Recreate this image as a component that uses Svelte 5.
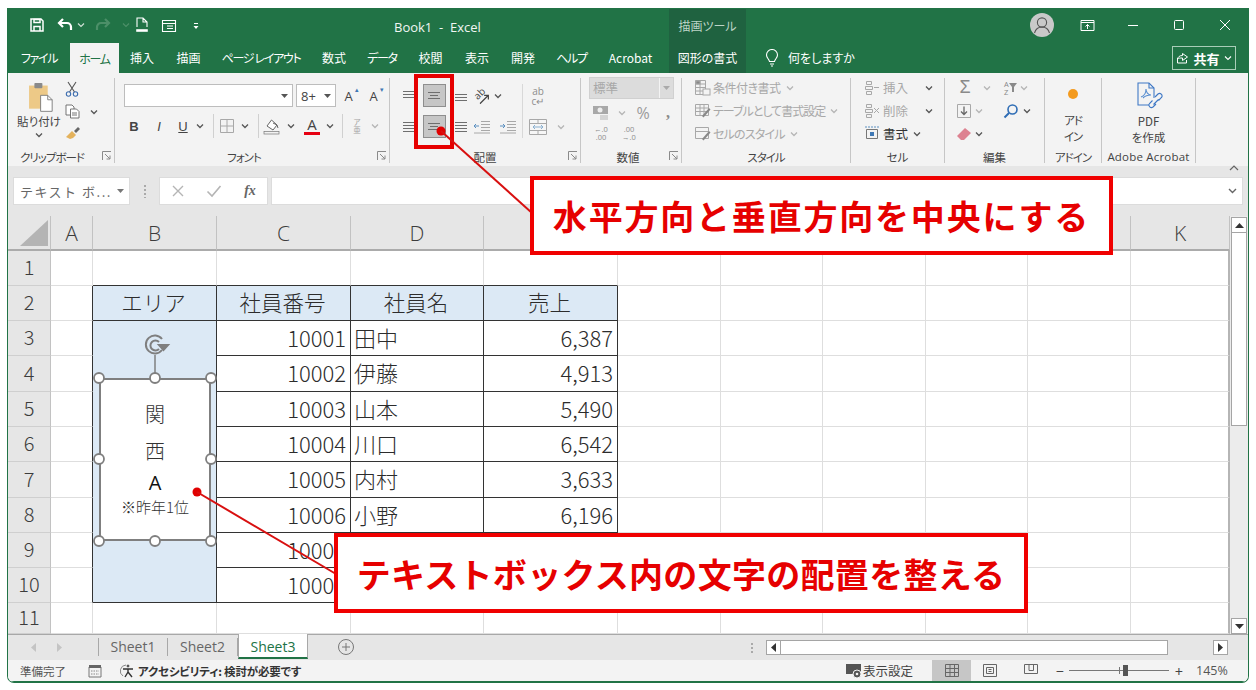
<script lang="ts">
	const tabs = [
		{ label: 'ファイル', w: 62, kana: true },
		{ label: 'ホーム', w: 49, active: true, kana: true },
		{ label: '挿入', w: 46 },
		{ label: '描画', w: 47 },
		{ label: 'ページ レイアウト', w: 98, kana: true },
		{ label: '数式', w: 48 },
		{ label: 'データ', w: 48, kana: true },
		{ label: '校閲', w: 49 },
		{ label: '表示', w: 44 },
		{ label: '開発', w: 48 },
		{ label: 'ヘルプ', w: 49, kana: true },
		{ label: 'Acrobat', w: 69 },
		{ label: '図形の書式', w: 77, context: true }
	];

	// E to J headers sit under the first callout
	const columns = [
		{ name: 'A', w: 42 },
		{ name: 'B', w: 124 },
		{ name: 'C', w: 134 },
		{ name: 'D', w: 133 },
		{ name: '', w: 134 },
		{ name: '', w: 103 },
		{ name: '', w: 102 },
		{ name: '', w: 103 },
		{ name: '', w: 102 },
		{ name: '', w: 103 },
		{ name: 'K', w: 99 }
	];
	const rowHeights = [35, 35, 35, 36, 35, 35, 36, 35, 35, 35, 31];

	const records = [
		['10001', '田中', '6,387'],
		['10002', '伊藤', '4,913'],
		['10003', '山本', '5,490'],
		['10004', '川口', '6,542'],
		['10005', '内村', '3,633'],
		['10006', '小野', '6,196'],
		['10007', '', ''],
		['10008', '', '']
	];

	const gridCols = '43px ' + columns.map((c) => c.w + 'px').join(' ');
	const gridRows = '35px ' + rowHeights.map((h) => h + 'px').join(' ');

	function cellAt(r: number, c: number) {
		// r and c are 1-based sheet positions, B2:E10 is the table
		if (r === 2 && c >= 2 && c <= 5) {
			return { text: ['エリア', '社員番号', '社員名', '売上'][c - 2], cls: 'tbl head' };
		}
		if (r >= 3 && r <= 10 && c === 2) {
			return { text: '', cls: r === 10 ? 'area last' : 'area' };
		}
		if (r >= 3 && r <= 10 && c >= 3 && c <= 5) {
			const align = c === 4 ? 'left' : 'right';
			return { text: records[r - 3][c - 3], cls: 'tbl ' + align };
		}
		if (r === 1 && c >= 2 && c <= 5) return { text: '', cls: 'above' };
		if (c === 1 && r >= 2 && r <= 10) return { text: '', cls: 'before' };
		if (c === 11) return { text: '', cls: 'lastcol' };
		return { text: '', cls: '' };
	}

	const handles = [
		[99, 378], [155, 378], [211, 378],
		[99, 459], [211, 459],
		[99, 541], [155, 541], [211, 541]
	];
</script>

{#snippet chev(dim = false)}
	<svg class="chev" class:dim width="8" height="6" viewBox="0 0 8 6"><path d="M1 1.5 4 4.5 7 1.5" fill="none" stroke="currentColor" stroke-width="1.3" /></svg>
{/snippet}

{#snippet launcher()}
	<svg class="launcher" width="10" height="10" viewBox="0 0 10 10"><path d="M.5 9V.5H9M3 3l5 5M8 4.5V8H4.5" fill="none" stroke="#8a8a8a" /></svg>
{/snippet}

{#snippet lines(kind: string)}
	<svg width="16" height="14" viewBox="0 0 16 14" stroke="#6e6e6e" stroke-width="1.2">
		{#if kind === 'top'}
			<path d="M2 2.5h12M2 5.5h12M2 8.5h12" />
		{:else if kind === 'mid'}
			<path d="M2 3.5h12M4 6.5h8M2 9.5h12" />
		{:else if kind === 'bot'}
			<path d="M2 5.5h12M2 8.5h12M2 11.5h12" />
		{:else}
			<path d="M2 2.5h12M2 5.5h12M2 8.5h12M2 11.5h12" />
		{/if}
	</svg>
{/snippet}

<div class="page">
	<div class="window">
		<header class="title">
			<div class="qat">
				<svg class="q1" width="16" height="16" viewBox="0 0 16 16" fill="none" stroke="#fff" stroke-width="1.5"><path d="M2 2h10l2 2v10H2z" /><path d="M5 2.5h6v3H5zM5 14V9.5h6V14" /></svg>
				<svg class="q2" width="16" height="14" viewBox="0 0 16 14" fill="none" stroke="#fff" stroke-width="2.2"><path d="M6 1 2 5l4 4" /><path d="M2.5 5H10a4 4 0 0 1 4 4v3" /></svg>
				<svg class="q3" width="8" height="6" viewBox="0 0 8 6"><path d="M1 1.5 4 4.5 7 1.5" fill="none" stroke="#cfe0d6" stroke-width="1.2" /></svg>
				<svg class="q4" width="16" height="14" viewBox="0 0 16 14" fill="none" stroke="#4c8f68" stroke-width="2.2"><path d="M10 1l4 4-4 4" /><path d="M13.5 5H6a4 4 0 0 0-4 4v3" /></svg>
				<svg class="q5" width="8" height="6" viewBox="0 0 8 6"><path d="M1 1.5 4 4.5 7 1.5" fill="none" stroke="#4c8f68" stroke-width="1.2" /></svg>
				<svg class="q6" width="14" height="16" viewBox="0 0 14 16" fill="none" stroke="#fff" stroke-width="1.1"><path d="M2 10V1h6l4 4v5M8 1v4h4" /><path d="M1.5 12.5h11v2h-11z" fill="#fff" stroke-width=".6" /></svg>
				<svg class="q7" width="16" height="14" viewBox="0 0 16 14" fill="none" stroke="#fff" stroke-width="1.1"><path d="M1.5 1.5h13v11h-13zM1.5 4.5h13M6 7h6M6 9.5h6" /></svg>
				<svg class="q8" width="6" height="8" viewBox="0 0 6 8" fill="#fff"><path d="M1 1h4v1H1zM.5 4h5L3 7z" /></svg>
			</div>
			<div class="doc-name">Book1 &nbsp;-&nbsp; Excel</div>
			<div class="context-head">描画ツール</div>
			<div class="win-controls">
				<div class="avatar">
					<svg width="24" height="24" viewBox="0 0 24 24" fill="none" stroke="#555" stroke-width="1.1"><circle cx="12" cy="9.5" r="4.6" /><path d="M4.5 20c1.2-4.2 4-6 7.5-6s6.300 1.800 7.500 6" /></svg>
				</div>
				<svg class="wc wc-ribbon" width="15" height="13" viewBox="0 0 15 13" fill="none" stroke="#fff"><path d="M1 1.500h13v10H1zM1 3.500h13M7.500 10V5.500M5.500 7.500l2-2 2 2" /></svg>
				<svg class="wc wc-min" width="12" height="12" viewBox="0 0 12 12" stroke="#fff"><path d="M1 6.500h10" /></svg>
				<svg class="wc wc-max" width="12" height="12" viewBox="0 0 12 12" fill="none" stroke="#fff"><rect x="1.500" y="1.500" width="9" height="9" rx="1" /></svg>
				<svg class="wc wc-close" width="12" height="12" viewBox="0 0 12 12" stroke="#fff"><path d="M1 1l10 10M11 1 1 11" /></svg>
			</div>
		</header>

		<nav class="tabs">
			{#each tabs as tab}
				<div class="tab" class:active={tab.active} class:context={tab.context} class:kana={tab.kana} style:width="{tab.w}px">{tab.label}</div>
			{/each}
			<div class="tell">
				<svg width="14" height="18" viewBox="0 0 14 18" fill="none" stroke="#fff" stroke-width="1.1"><path d="M4.500 12.500C4 10 1.500 9 1.500 6a5.500 5.500 0 0 1 11 0c0 3-2.500 4-3 6.500zM5 15h4M6 17h2" /></svg>
				<span>何をしますか</span>
			</div>
			<div class="share">
				<svg width="13" height="12" viewBox="0 0 13 12" fill="none" stroke="#fff"><path d="M1.500 6v5h9V8M1.500 7c.5-2 2-3.500 5-3.500V1.500L11.500 5l-5 3.500V6C4 6 2.500 6 1.500 7z" /></svg>
				<b>共有</b>
				<svg width="8" height="6" viewBox="0 0 8 6"><path d="M1 1.500 4 4.500 7 1.500" fill="none" stroke="#fff" stroke-width="1.100" /></svg>
			</div>
		</nav>

		<section class="ribbon">
			<div class="group g-clip">
				<div class="body clip-body">
					<div class="paste">
						<svg width="27" height="32" viewBox="0 0 30 36"><rect x="1" y="4" width="21" height="26" fill="#edc987" /><rect x="7" y="1" width="9" height="6" rx="1" fill="#8a8a8a" /><path d="M14 15h8l5 5v13H14z" fill="#fff" stroke="#777" /><path d="M22 15v5h5" fill="none" stroke="#777" /></svg>
						<span>貼り付け</span>
						{@render chev()}
					</div>
					<div class="clip-tools">
						<svg width="14" height="16" viewBox="0 0 14 16" fill="none" stroke="#555" stroke-width="1.100"><path d="M3 1l6.500 10M11 1 4.500 11" /><circle cx="3.500" cy="13" r="2.200" stroke="#3f6fb0" /><circle cx="10.500" cy="13" r="2.200" stroke="#3f6fb0" /></svg>
						<div class="copy-row">
							<svg width="15" height="15" viewBox="0 0 15 15" fill="#fff" stroke="#666" stroke-width=".9"><path d="M1 1h6l2 2v8H1z" /><path d="M5.500 5h6l2.500 2.500V14H5.500z" /><path d="M7 9h5M7 11h5" /></svg>
							{@render chev()}
						</div>
						<svg width="16" height="14" viewBox="0 0 16 14"><path d="M1 11 7 5l4 4-3 3-3 1z" fill="#e4b25c" /><path d="M9 5l4-4 2 2-4 4z" fill="#666" /></svg>
					</div>
				</div>
				<div class="label kana clip-label">クリップボード{@render launcher()}</div>
			</div>

			<div class="group g-font">
				<div class="body font-body">
					<div class="font-row1">
						<div class="font-box name"><svg width="7" height="4" viewBox="0 0 7 4"><path d="M0 0h7L3.500 4z" fill="#555" /></svg></div>
						<div class="font-box size">8+<svg width="7" height="4" viewBox="0 0 7 4"><path d="M0 0h7L3.500 4z" fill="#555" /></svg></div>
						<div class="grow-a">A<i>▴</i></div>
						<div class="grow-a">A<i>▾</i></div>
					</div>
					<div class="font-row2">
						<b>B</b>
						<em>I</em>
						<u>U</u>
						{@render chev()}
						<span class="vsep"></span>
						<svg width="16" height="16" viewBox="0 0 16 16" fill="none" stroke="#a8a8a8"><path d="M1.500 1.500h13v13h-13zM8 1.500v13M1.500 8h13" /></svg>
						{@render chev()}
						<span class="vsep"></span>
						<svg width="18" height="18" viewBox="0 0 18 18"><path d="M4 9 8.500 3 14 8l-4 5z" fill="#fff" stroke="#666" /><path d="M10 6l4 2 1 3" fill="none" stroke="#666" /><rect x="1" y="14.500" width="15" height="2.500" fill="#f2f2f2" stroke="#777" stroke-width=".7" /></svg>
						{@render chev()}
						<div class="font-color">A</div>
						{@render chev()}
						<span class="vsep"></span>
						<div class="phonetic">ア<br />亜</div>
						{@render chev(true)}
					</div>
				</div>
				<div class="label kana font-label">フォント{@render launcher()}</div>
			</div>

			<div class="group g-align">
				<div class="body align-body">
					<div class="align-left">
						<div class="al-row r1">
							{@render lines('top')}
							<span class="pressed">{@render lines('mid')}</span>
							{@render lines('bot')}
							<span class="orient">ab<svg width="14" height="8" viewBox="0 0 14 8" fill="none" stroke="#444" stroke-width="1.200"><path d="M0 4h12M9 1l3 3-3 3" /></svg></span>
							{@render chev()}
						</div>
						<div class="al-row r2">
							{@render lines('left')}
							<span class="pressed">{@render lines('mid')}</span>
							{@render lines('left')}
							<svg width="18" height="14" viewBox="0 0 18 14" fill="none" stroke="#a8a8a8"><path d="M8 1.500h9M8 4.500h9M8 7.500h9M8 10.500h9M1 13h16" /><path d="M6 6H1M3 4 1 6l2 2" stroke="#5a8fc0" /></svg>
							<span></span>
							<svg width="18" height="14" viewBox="0 0 18 14" fill="none" stroke="#a8a8a8"><path d="M8 1.500h9M8 4.500h9M8 7.500h9M8 10.500h9M1 13h16" /><path d="M1 6h5M4 4l2 2-2 2" stroke="#5a8fc0" /></svg>
						</div>
					</div>
					<div class="align-right">
						<div class="wrap-ic">ab<br />c↵</div>
						<span></span>
						<svg width="20" height="18" viewBox="0 0 20 18" fill="#f6f6f6" stroke="#a8a8a8"><path d="M1.500 1.500h17v15h-17zM1.500 5.500h17M1.500 12.500h17M10 1.500v4M10 12.500v4" /><path d="M5 9h10M7 7 5 9l2 2M13 7l2 2-2 2" stroke="#8ab0d0" /></svg>
						{@render chev(true)}
					</div>
				</div>
				<div class="label">配置{@render launcher()}</div>
			</div>

			<div class="group g-num">
				<div class="body num-body">
					<div class="num-select"><span>標準</span><i><svg width="7" height="4" viewBox="0 0 7 4"><path d="M0 0h7L3.500 4z" fill="#aaa" /></svg></i></div>
					<div class="num-row">
						<svg width="18" height="16" viewBox="0 0 18 16"><rect x="1" y="1" width="15" height="8" fill="#a8a8a8" /><circle cx="8" cy="5" r="2.500" fill="#eee" /><path d="M8 10h8v5H8z" fill="#d4d4d4" /></svg>
						{@render chev(true)}
						<span class="pct">%</span>
						<span class="comma">,</span>
					</div>
					<div class="dec-row">
						<span>←.0<br />.00</span>
						<span>.00<br />→.0</span>
					</div>
				</div>
				<div class="label num-label">数値{@render launcher()}</div>
			</div>

			<div class="group g-style">
				<div class="body style-body">
					<div class="st-row s1">
						<svg width="17" height="17" viewBox="0 0 17 17" fill="none" stroke="#a8a8a8"><path d="M1.500 1.500h10v14h-10zM1.500 5h10M1.500 8.500h10M1.500 12h10M6 1.500v14" /><rect x="2" y="2" width="4" height="3" fill="#888" /><rect x="9" y="10" width="7" height="6" fill="#f3f3f3" /></svg>
						<span>条件付き書式</span>{@render chev(true)}
					</div>
					<div class="st-row s2">
						<svg width="17" height="17" viewBox="0 0 17 17" fill="none" stroke="#a8a8a8"><path d="M1.500 2.500h13v11h-13zM1.500 6h13M1.500 9.500h13M6 2.500v11M10 2.500v11" /><path d="M8 14l7-8 1.500 1.500-7 8z" fill="#888" stroke="none" /></svg>
						<span>テーブルとして書式設定</span>{@render chev(true)}
					</div>
					<div class="st-row s3">
						<svg width="17" height="17" viewBox="0 0 17 17" fill="none" stroke="#a8a8a8"><path d="M1.500 2.500h13v11h-13zM1.500 6.500h13" /><path d="M8 14l7-8 1.500 1.500-7 8z" fill="#888" stroke="none" /></svg>
						<span>セルのスタイル</span>{@render chev(true)}
					</div>
				</div>
				<div class="label kana">スタイル</div>
			</div>

			<div class="group g-cell">
				<div class="body cell-body">
					<div class="ce-row">
						<svg width="16" height="15" viewBox="0 0 16 15" fill="none" stroke="#a8a8a8"><path d="M2.500 1.500h5v3h-5zM1.500 6.500h7v3h-7zM2.500 11.500h5v3h-5zM10 7.500h5" /></svg>
						<span>挿入</span>{@render chev()}
					</div>
					<div class="ce-row">
						<svg width="16" height="15" viewBox="0 0 16 15" fill="none" stroke="#a8a8a8"><path d="M2.500 1.500h5v3h-5zM1.500 6.500h7v3h-7zM2.500 11.500h5v3h-5zM10 5l5 5M15 5l-5 5" /></svg>
						<span>削除</span>{@render chev()}
					</div>
					<div class="ce-row on">
						<svg width="16" height="15" viewBox="0 0 16 15" fill="none" stroke="#777"><path d="M2.500 3.500h11v9h-11z" /><path d="M1 1h14" stroke-dasharray="2 1" stroke="#5a8fc0" /><rect x="6" y="6" width="4" height="4" fill="#3f78b5" stroke="none" /></svg>
						<span>書式</span>{@render chev()}
					</div>
				</div>
				<div class="label">セル</div>
			</div>

			<div class="group g-edit">
				<div class="body edit-body">
					<div class="ed-row one">
						<span class="sigma">Σ</span>{@render chev(true)}
						<span class="sort-ic">A<br />Z</span>
						<svg width="8" height="9" viewBox="0 0 8 9"><path d="M0 0h8L5 4v5H3V4z" fill="#8a8a8a" /></svg>
						{@render chev(true)}
					</div>
					<div class="ed-row two">
						<svg width="16" height="16" viewBox="0 0 16 16" fill="none" stroke="#a8a8a8"><path d="M1.500 1.500h13v13h-13z" /><path d="M8 3.500v8M5 8.500l3 3 3-3" stroke="#666" stroke-width="1.300" /></svg>
						{@render chev(true)}
						<svg class="find" width="16" height="16" viewBox="0 0 16 16" fill="none" stroke="#2f6db5" stroke-width="1.600"><circle cx="9.500" cy="6.500" r="4.500" /><path d="M6 10 1.500 14.500" stroke-width="2" /></svg>
						{@render chev()}
					</div>
					<div class="ed-row three">
						<svg width="16" height="14" viewBox="0 0 16 14"><path d="M1 9 9 1l6 5-7 7H5z" fill="#dd8291" /></svg>
						{@render chev()}
					</div>
				</div>
				<div class="label">編集</div>
			</div>

			<div class="group g-addin">
				<div class="body big-body">
					<span class="dot"></span>
					<span class="big-text kana first">アド<br />イン</span>
				</div>
				<div class="label kana">アドイン</div>
			</div>

			<div class="group g-acro">
				<div class="body big-body">
					<svg width="28" height="28" viewBox="0 0 28 28" fill="none" stroke="#3f78c5" stroke-width="1.100"><path d="M19 16V6l-5-5H3v22h11" /><path d="M14 1v5h5" /><path d="M6 15c3-1 5-4 5-8 0 3 2 6 5 6-3 0-6 1-8 3" stroke="#5a8fd0" /><path d="M20 15l3-3a2.500 2.500 0 0 1 3.500 3.500l-3 3M21 22l-3 3a2.500 2.500 0 0 1-3.500-3.500l3-3M18.500 22.500l5-5" /></svg>
					<span class="big-text">PDF<br />を作成</span>
				</div>
				<div class="label acro-label">Adobe Acrobat</div>
			</div>

			<div class="collapse">
				<svg width="10" height="6" viewBox="0 0 10 6"><path d="M1 5l4-4 4 4" fill="none" stroke="#666" stroke-width="1.200" /></svg>
			</div>
		</section>

		<section class="formula">
			<div class="name-box"><span>テキスト ボ...</span><svg width="7" height="4" viewBox="0 0 7 4"><path d="M0 0h7L3.500 4z" fill="#777" /></svg></div>
			<div class="grip"></div>
			<div class="fx-buttons">
				<svg width="14" height="14" viewBox="0 0 14 14" stroke="#b5b5b5" stroke-width="1.400"><path d="M2 2l10 10M12 2 2 12" /></svg>
				<svg width="16" height="14" viewBox="0 0 16 14" fill="none" stroke="#b5b5b5" stroke-width="1.600"><path d="M1.500 7.500 6 12l8.500-10" /></svg>
				<i>fx</i>
			</div>
			<div class="fx-input"><svg width="9" height="6" viewBox="0 0 9 6"><path d="M1 1l3.500 3.500L8 1" fill="none" stroke="#666" stroke-width="1.400" /></svg></div>
		</section>

		<section class="sheet">
			<div class="grid" style:grid-template-columns={gridCols} style:grid-template-rows={gridRows}>
				<div class="corner"><span></span></div>
				{#each columns as col}
					<div class="col-head">{col.name}</div>
				{/each}
				{#each rowHeights as _, ri}
					<div class="row-head">{ri + 1}</div>
					{#each columns as _col, ci}
						{@const cell = cellAt(ri + 1, ci + 1)}
						<div class="cell {cell.cls}">{cell.text}</div>
					{/each}
				{/each}
			</div>
			<div class="vscroll">
				<div class="sb-btn"><svg width="9" height="5" viewBox="0 0 9 5"><path d="M0 5h9L4.500 0z" fill="#333" /></svg></div>
				<div class="sb-thumb"></div>
				<div class="sb-track"></div>
				<div class="sb-btn"><svg width="9" height="5" viewBox="0 0 9 5"><path d="M0 0h9L4.500 5z" fill="#333" /></svg></div>
			</div>
		</section>

		<section class="sheet-tabs">
			<div class="nav-arrows">
				<svg width="5" height="9" viewBox="0 0 5 9"><path d="M5 0v9L0 4.500z" fill="#c4c4c4" /></svg>
				<svg width="5" height="9" viewBox="0 0 5 9"><path d="M0 0v9l5-4.500z" fill="#c4c4c4" /></svg>
			</div>
			<div class="stab first">Sheet1</div>
			<div class="stab">Sheet2</div>
			<div class="stab current">Sheet3</div>
			<svg class="plus" width="18" height="18" viewBox="0 0 18 18" fill="none" stroke="#777"><circle cx="9" cy="9" r="7.500" /><path d="M9 5v8M5 9h8" /></svg>
			<div class="hgrip"></div>
			<div class="hscroll">
				<div class="sb-btn h"><svg width="5" height="9" viewBox="0 0 5 9"><path d="M5 0v9L0 4.500z" fill="#333" /></svg></div>
				<div class="hthumb"></div>
				<div class="htrack"></div>
				<div class="sb-btn h"><svg width="5" height="9" viewBox="0 0 5 9"><path d="M0 0v9l5-4.500z" fill="#333" /></svg></div>
			</div>
		</section>

		<footer class="status">
			<span class="ready">準備完了</span>
			<svg class="macro" width="14" height="14" viewBox="0 0 14 14"><path d="M1 3h12v10H1z" fill="#f3f3f3" stroke="#777" /><path d="M1 1h12v3H1z" fill="#666" /><path d="M3 7h8M3 10h8" stroke="#888" stroke-dasharray="1.500 1" /></svg>
			<svg class="access" width="18" height="16" viewBox="0 0 18 16" fill="none" stroke="#555"><path d="M7 2a6 6 0 0 0-3 11" stroke="#888" /><circle cx="9" cy="3" r="1" fill="#444" /><path d="M4 6h10M9 6v3L6 14M9 9l4 5" stroke-width="1.400" stroke="#333" /></svg>
			<b class="acc-text">アクセシビリティ: 検討が必要です</b>
			<div class="status-right">
				<svg width="17" height="16" viewBox="0 0 17 16"><rect x="0" y="1" width="15" height="10" fill="#555" /><circle cx="11" cy="11" r="4" fill="#555" stroke="#f3f3f3" /><circle cx="11" cy="11" r="1.300" fill="#f3f3f3" /></svg>
				<span class="disp">表示設定</span>
				<div class="view on"><svg width="14" height="13" viewBox="0 0 14 13" fill="none" stroke="#666"><path d="M.5.500h13v12H.500zM.5 4.500h13M.5 8.500h13M5 .5v12M9.500.5v12" /></svg></div>
				<div class="view v2"><svg width="14" height="13" viewBox="0 0 14 13" fill="none" stroke="#666"><path d="M.5.500h13v12H.500z" /><path d="M3.500 3.500h7v6h-7zM5.500 5.500h3M5.500 7.500h3" /></svg></div>
				<div class="view v3"><svg width="14" height="13" viewBox="0 0 14 13" fill="none" stroke="#666"><path d="M.5.500h13v9H.500zM5 .5v6h4.500v-6" /></svg></div>
				<span class="zm">−</span>
				<div class="slider"><i class="tick"></i><i class="knob"></i></div>
				<span class="zm">+</span>
				<span class="pctz">145%</span>
			</div>
		</footer>
	</div>

	<!-- annotations drawn on top of the screenshot -->
	<div class="shape">
		<svg class="shape-lines" width="1256" height="690" viewBox="0 0 1256 690">
			<path d="M155 378v-23" stroke="#7f7f7f" stroke-width="1.500" />
			<g fill="none" stroke="#7f7f7f" stroke-width="2">
				<path d="M162 350a9 9 0 1 1 0-11" />
				<path d="M159 349a5 5 0 1 1 0-7" />
				<path d="M159 345h9l-4.500 5z" fill="#7f7f7f" />
			</g>
		</svg>
		<div class="textbox">
			<span class="big">関</span>
			<span class="big">西</span>
			<span class="big a">A</span>
			<span class="small">※昨年1位</span>
		</div>
		<svg class="shape-lines" width="1256" height="690" viewBox="0 0 1256 690">
			{#each handles as [x, y]}
				<circle cx={x} cy={y} r="5" fill="#fff" stroke="#7f7f7f" stroke-width="1.800" />
			{/each}
		</svg>
	</div>

	<div class="frame"></div>
	<svg class="arrows" width="1256" height="690" viewBox="0 0 1256 690">
		<circle cx="441" cy="131" r="4.500" fill="#e00000" />
		<path d="M441 131 532 213" stroke="#d81010" stroke-width="2" />
		<circle cx="197" cy="492" r="4.500" fill="#e00000" />
		<path d="M197 492 336 574" stroke="#d81010" stroke-width="2" />
	</svg>
	<div class="callout c1">水平方向と垂直方向を中央にする</div>
	<div class="callout c2">テキストボックス内の文字の配置を整える</div>
</div>

<style>
	:global(body) {
		margin: 0;
		background: #fff;
	}

	.page {
		position: relative;
		width: 1256px;
		height: 690px;
		overflow: hidden;
		font-family: 'Noto Sans CJK JP', sans-serif;
		color: #444;
	}

	.window {
		width: 1240px;
		margin: 8px 0 0 7px;
		border: 1px solid #217346;
		border-top: 0;
		border-radius: 0 0 7px 7px;
		overflow: hidden;
		font-feature-settings: 'palt';
	}

	/* --- Title bar --- */

	.title {
		position: relative;
		height: 34px;
		background: #217346;
		color: #fff;
	}

	.qat svg {
		position: absolute;
	}
	.q1 { left: 21px; top: 9px; }
	.q2 { left: 49px; top: 10px; }
	.q3 { left: 69px; top: 14px; }
	.q4 { left: 87px; top: 10px; }
	.q5 { left: 114px; top: 14px; }
	.q6 { left: 127px; top: 9px; }
	.q7 { left: 153px; top: 11px; }
	.q8 { left: 185px; top: 14px; }

	.doc-name {
		position: absolute;
		left: 386px;
		top: 9px;
		font-family: 'Open Sans', sans-serif;
		font-size: 13px;
		line-height: 20px;
		color: #f1f6f3;
	}

	.context-head {
		position: absolute;
		left: 661px;
		top: 1px;
		width: 77px;
		height: 33px;
		background: #1f6240;
		color: #bcd4c6;
		font-size: 12px;
		line-height: 34px;
		text-align: center;
	}

	.win-controls {
		position: absolute;
		inset: 0;
	}
	.win-controls > * {
		position: absolute;
	}
	.avatar {
		left: 1022px;
		top: 5px;
		width: 24px;
		height: 24px;
		border-radius: 50%;
		background: #c9c9c9;
	}
	.wc-ribbon { left: 1072px; top: 11px; }
	.wc-min { left: 1119px; top: 11px; }
	.wc-max { left: 1165px; top: 11px; }
	.wc-close { left: 1211px; top: 11px; }

	/* --- Tabs --- */

	.tabs {
		position: relative;
		display: flex;
		height: 31px;
		background: #217346;
		color: #fff;
		font-size: 12px;
	}

	.tab {
		display: flex;
		align-items: center;
		justify-content: center;
		flex: none;
	}
	.tab.kana {
		letter-spacing: -1.3px;
	}
	.tab.active {
		background: #f3f3f3;
		color: #217346;
		margin-top: 1px;
	}
	.tab.context {
		background: #1f6240;
		margin-left: 4px;
		width: 77px;
	}

	.tell {
		display: flex;
		align-items: center;
		gap: 9px;
		margin-left: 19px;
	}

	.share {
		position: absolute;
		left: 1164px;
		top: 4px;
		width: 64px;
		height: 24px;
		box-sizing: border-box;
		border: 1px solid #a9cdb8;
		display: flex;
		align-items: center;
		justify-content: center;
		gap: 4px;
		font-size: 13px;
	}

	/* --- Ribbon --- */

	.ribbon {
		display: flex;
		position: relative;
		height: 93px;
		background: #f3f3f3;
		font-size: 12px;
	}

	.group {
		position: relative;
		flex: none;
		box-sizing: border-box;
		border-right: 1px solid #c6c6c6;
		display: flex;
		flex-direction: column;
		margin-top: 5px;
		height: 85px;
	}
	.g-clip { width: 107px; }
	.g-font { width: 275px; }
	.g-align { width: 191px; }
	.g-num { width: 101px; }
	.g-style { width: 169px; }
	.g-cell { width: 94px; }
	.g-edit { width: 100px; }
	.g-addin { width: 57px; }
	.g-acro { width: 94px; }

	.body {
		flex: 1;
		min-height: 0;
	}

	.label {
		position: relative;
		height: 18px;
		margin-bottom: -3px;
		line-height: 18px;
		text-align: center;
		font-size: 11.5px;
		color: #444;
		white-space: nowrap;
	}
	.label.kana,
	.big-text.kana {
		letter-spacing: -1px;
	}
	.clip-label {
		padding-right: 18px;
	}
	.font-label {
		padding-right: 16px;
	}
	.num-label {
		padding-right: 6px;
	}
	.launcher {
		position: absolute;
		right: 2px;
		top: 3px;
	}

	.chev {
		color: #555;
		flex: none;
	}
	.chev.dim {
		color: #b5b5b5;
	}

	/* clipboard */
	.clip-body {
		display: flex;
		padding-left: 8px;
	}
	.paste {
		width: 46px;
		display: flex;
		flex-direction: column;
		align-items: center;
		padding-top: 4px;
		font-size: 11.5px;
		line-height: 14px;
	}
	.paste svg:first-child {
		margin-left: 4px;
	}
	.paste .chev {
		margin-top: 4px;
	}
	.clip-tools {
		display: flex;
		flex-direction: column;
		gap: 7px;
		padding: 3px 0 0 3px;
	}
	.copy-row {
		display: flex;
		align-items: center;
		gap: 10px;
	}

	/* font */
	.font-body {
		padding: 6px 0 0 9px;
	}
	.font-row1 {
		display: flex;
		align-items: center;
		height: 23px;
	}
	.font-box {
		box-sizing: border-box;
		height: 23px;
		background: #fff;
		border: 1px solid #bdbdbd;
		display: flex;
		align-items: center;
		justify-content: space-between;
		padding: 0 4px;
		font-family: 'Open Sans', sans-serif;
		font-size: 13px;
	}
	.font-box.name {
		width: 169px;
		justify-content: flex-end;
		margin-right: 3px;
	}
	.font-box.size {
		width: 40px;
	}
	.grow-a {
		width: 25px;
		text-align: center;
		font-size: 13px;
		position: relative;
		font-family: 'Open Sans', sans-serif;
	}
	.grow-a i {
		position: absolute;
		font-style: normal;
		font-size: 7px;
		color: #3f78b5;
		top: -2px;
		right: 2px;
	}
	.font-row2 {
		display: grid;
		grid-template-columns: 24px 26px 22px 12px 14px 14px 22px 4px 24px 14px 28px 8px 16px 14px 22px;
		margin: 7px 0 0 -2px;
		height: 24px;
		place-items: center;
		font-family: 'Liberation Sans', sans-serif;
		font-size: 13px;
	}
	.vsep {
		width: 1px;
		height: 24px;
		background: #d0d0d0;
	}
	.font-color {
		width: 16px;
		text-align: center;
		line-height: 15px;
		font-size: 15px;
		border-bottom: 3px solid #e60012;
		font-family: 'Open Sans', sans-serif;
	}
	.phonetic {
		font-size: 7.5px;
		line-height: 8px;
		color: #a5a5a5;
		text-align: center;
		font-family: 'Noto Sans CJK JP', sans-serif;
	}

	/* alignment */
	.align-body {
		display: flex;
		padding: 6px 0 0 7px;
	}
	.align-left {
		width: 125px;
		flex: none;
		border-right: 1px solid #d8d8d8;
		height: 54px;
	}
	.al-row {
		display: grid;
		height: 23px;
		place-items: center;
	}
	.al-row.r1 {
		grid-template-columns: 24px 26px 28px 14px 18px;
		justify-content: start;
	}
	.al-row.r2 {
		grid-template-columns: 24px 26px 28px 13px 6px 28px;
		margin-top: 8px;
	}
	.pressed {
		width: 23px;
		height: 23px;
		box-sizing: border-box;
		background: #c6c6c6;
		border: 1px solid #8e8e8e;
		display: flex;
		align-items: center;
		justify-content: center;
	}
	.orient {
		display: inline-flex;
		flex-direction: column;
		align-items: center;
		transform: rotate(-45deg);
		font-family: 'Open Sans', sans-serif;
		font-size: 10px;
		line-height: 8px;
		color: #444;
	}
	.align-right {
		display: grid;
		grid-template-columns: 30px 16px;
		grid-template-rows: 23px 23px;
		row-gap: 8px;
		place-items: center;
	}
	.wrap-ic {
		font-family: 'Open Sans', sans-serif;
		font-size: 10px;
		line-height: 10px;
		color: #8d8d8d;
		text-align: center;
	}

	/* number */
	.num-body {
		padding: 0 0 0 8px;
	}
	.num-select {
		width: 85px;
		height: 22px;
		margin-top: -1px;
		display: flex;
		background: #dcdcdc;
		border: 1px solid #d0d0d0;
		box-sizing: border-box;
		color: #a8a8a8;
		font-size: 12.5px;
		line-height: 20px;
	}
	.num-select span {
		flex: 1;
		padding-left: 3px;
	}
	.num-select i {
		width: 13px;
		border-left: 1px solid #f3f3f3;
		display: flex;
		align-items: center;
		justify-content: center;
	}
	.num-row {
		display: grid;
		grid-template-columns: 24px 18px 24px 26px;
		place-items: center;
		margin-top: 3px;
		height: 20px;
	}
	.pct {
		font-family: 'Open Sans', sans-serif;
		font-size: 16px;
		color: #9a9a9a;
	}
	.comma {
		font-family: 'Liberation Serif', serif;
		font-weight: 700;
		font-size: 16px;
		color: #8a8a8a;
		line-height: 10px;
	}
	.dec-row {
		display: grid;
		grid-template-columns: 24px 32px;
		margin-top: 3px;
		font-family: 'Open Sans', sans-serif;
		font-size: 7.5px;
		line-height: 8px;
		color: #8d8d8d;
		text-align: center;
	}

	/* styles */
	.style-body {
		padding: 0 0 0 12px;
		margin-top: -2px;
	}
	.st-row {
		display: flex;
		align-items: center;
		height: 23px;
		gap: 2px;
		color: #a8a8a8;
		font-size: 12px;
		white-space: nowrap;
	}
	.st-row.s1 span {
		letter-spacing: -0.5px;
	}
	.st-row.s2 span {
		letter-spacing: -1px;
	}
	.st-row.s3 span {
		letter-spacing: -0.8px;
	}
	.st-row .chev {
		margin-left: 3px;
	}

	/* cells */
	.cell-body {
		padding: 0 0 0 13px;
		margin-top: -2px;
	}
	.ce-row {
		display: flex;
		align-items: center;
		height: 23px;
		gap: 3px;
		color: #a8a8a8;
		font-size: 12.5px;
	}
	.ce-row .chev {
		margin-left: 14px;
	}
	.ce-row.on {
		color: #333;
	}
	.ce-row.on .chev {
		margin-left: 2px;
	}

	/* editing */
	.edit-body {
		padding: 0 0 0 11px;
		margin-top: -2px;
	}
	.ed-row {
		display: flex;
		align-items: center;
		height: 23px;
	}
	.sigma {
		font-family: 'Liberation Sans', sans-serif;
		font-size: 18px;
		color: #8a8a8a;
		width: 18px;
		text-align: center;
	}
	.ed-row.one > .chev:first-of-type {
		margin: 0 0 0 9px;
	}
	.sort-ic {
		margin-left: 13px;
		font-family: 'Open Sans', sans-serif;
		font-size: 7.5px;
		line-height: 8px;
		color: #888;
	}
	.ed-row.one > svg:last-of-type {
		margin-left: 3px;
	}
	.ed-row .find {
		margin: 0 4px 0 20px;
	}
	.ed-row.two > .chev {
		margin-left: 3px;
	}
	.ed-row.two > .find + .chev {
		margin-left: 0;
	}
	.ed-row.three .chev {
		margin-left: 3px;
	}

	/* big buttons */
	.big-body {
		display: flex;
		flex-direction: column;
		align-items: center;
		padding-top: 4px;
	}
	.dot {
		width: 10px;
		height: 10px;
		border-radius: 50%;
		background: #f39a1e;
		margin: 7px 0 9px;
	}
	.big-text {
		font-size: 11.5px;
		line-height: 16px;
		text-align: center;
		margin-top: 3px;
	}
	.big-text.first {
		margin-top: 4px;
	}
	.acro-label {
		font-family: 'Open Sans', sans-serif;
		font-size: 11.5px;
		letter-spacing: 0.2px;
	}

	.collapse {
		position: absolute;
		left: 1221px;
		top: 84px;
	}

	/* --- Formula bar --- */

	.formula {
		height: 50px;
		box-sizing: border-box;
		background: #e6e6e6;
		display: flex;
		padding: 11px 5px 11px 5px;
	}
	.name-box {
		box-sizing: border-box;
		width: 117px;
		height: 28px;
		background: #fff;
		border: 1px solid #dcdcdc;
		display: flex;
		align-items: center;
		justify-content: space-between;
		padding: 0 5px 0 6px;
		font-size: 13px;
		color: #666;
		letter-spacing: 1.5px;
		font-feature-settings: normal;
	}
	.grip {
		width: 2px;
		height: 14px;
		margin: 7px 13px 0 14px;
		background-image: radial-gradient(circle, #aaa 1px, transparent 1px);
		background-size: 2px 4px;
	}
	.fx-buttons {
		box-sizing: border-box;
		width: 109px;
		height: 28px;
		background: #fff;
		border: 1px solid #dcdcdc;
		display: grid;
		grid-template-columns: 36px 36px 36px;
		place-items: center;
	}
	.fx-buttons i {
		font-family: 'Liberation Serif', serif;
		font-size: 14px;
		font-weight: 700;
		color: #666;
	}
	.fx-input {
		flex: 1;
		margin-left: 3px;
		height: 28px;
		background: #fff;
		border: 1px solid #dcdcdc;
		display: flex;
		align-items: center;
		justify-content: flex-end;
		padding-right: 5px;
		box-sizing: border-box;
	}

	/* --- Sheet --- */

	.sheet {
		display: flex;
		background: #e6e6e6;
		height: 418px;
	}
	.grid {
		display: grid;
		flex: none;
		width: 1222px;
	}
	.corner {
		background: #e6e6e6;
		border-right: 1px solid #c2c2c2;
		border-bottom: 2px solid #ababab;
		box-sizing: border-box;
		padding: 4px 2px 3px 12px;
	}
	.corner span {
		display: block;
		height: 100%;
		background: #b4b4b4;
		clip-path: polygon(100% 0, 100% 100%, 0 100%);
	}
	.col-head,
	.row-head {
		box-sizing: border-box;
		background: #e6e6e6;
		display: flex;
		align-items: center;
		justify-content: center;
		font-size: 21px;
		font-weight: 300;
		color: #3c3c3c;
		font-family: 'Open Sans', sans-serif;
	}
	.col-head {
		border-right: 1px solid #c2c2c2;
		border-bottom: 2px solid #ababab;
	}
	.row-head {
		border-right: 1px solid #c2c2c2;
		border-bottom: 1px solid #cfcfcf;
		font-family: 'Noto Sans CJK JP', sans-serif;
		font-size: 20px;
		padding-bottom: 3px;
	}
	.cell {
		box-sizing: border-box;
		background: #fff;
		border-right: 1px solid #dedede;
		border-bottom: 1px solid #dedede;
		display: flex;
		align-items: center;
		font-size: 22px;
		font-weight: 300;
		color: #2c2c2c;
		padding: 0 4px 3px 3px;
		font-feature-settings: normal;
		white-space: nowrap;
		overflow: hidden;
	}
	.cell.tbl {
		border-right: 1px solid #333;
		border-bottom: 1px solid #333;
	}
	.cell.head {
		background: #dce9f5;
		justify-content: center;
		font-size: 21.5px;
		padding-left: 0;
		padding-right: 2px;
	}
	.cell.right {
		justify-content: flex-end;
	}
	.cell.area {
		background: #dce9f5;
		border-right: 1px solid #333;
		border-bottom: 0;
	}
	.cell.area.last {
		border-bottom: 1px solid #333;
	}
	.cell.above {
		border-bottom: 1px solid #333;
	}
	.cell.before {
		border-right: 1px solid #333;
	}
	.cell.lastcol {
		border-right: 2px solid #b5b5b5;
	}

	.vscroll {
		width: 18px;
		flex: none;
		box-sizing: border-box;
		padding: 1px 1px 0 1px;
		display: flex;
		flex-direction: column;
		background: #ececec;
	}
	.sb-btn {
		box-sizing: border-box;
		height: 16px;
		flex: none;
		background: #fff;
		border: 1px solid #a5a5a5;
		display: flex;
		align-items: center;
		justify-content: center;
	}
	.sb-thumb {
		height: 193px;
		flex: none;
		box-sizing: border-box;
		background: #fff;
		border: 1px solid #a5a5a5;
		border-top: 0;
	}
	.sb-track {
		flex: 1;
	}

	/* --- Sheet tabs --- */

	.sheet-tabs {
		position: relative;
		height: 26px;
		background: #e6e6e6;
		border-top: 1px solid #a8a8a8;
		box-sizing: border-box;
		display: flex;
		font-size: 14px;
		font-family: 'Open Sans', sans-serif;
		color: #666;
	}
	.nav-arrows {
		width: 90px;
		flex: none;
		box-sizing: border-box;
		padding-left: 23px;
		display: flex;
		align-items: center;
		gap: 21px;
	}
	.stab {
		width: 70px;
		flex: none;
		box-sizing: border-box;
		text-align: center;
		height: 18px;
		margin-top: 3px;
		line-height: 18px;
		border-right: 1px solid #a8a8a8;
	}
	.stab.first {
		border-left: 1px solid #a8a8a8;
	}
	.stab.current {
		background: #fff;
		color: #217346;
		height: 25px;
		margin-top: -1px;
		line-height: 25px;
		border: 0;
		border-left: 1px solid #a8a8a8;
		border-right: 1px solid #a8a8a8;
		border-bottom: 2px solid #217346;
	}
	.plus {
		margin: 3px 0 0 29px;
		flex: none;
	}
	.hgrip {
		position: absolute;
		left: 743px;
		top: 7px;
		width: 2px;
		height: 11px;
		background-image: radial-gradient(circle, #aaa 1px, transparent 1px);
		background-size: 2px 4px;
	}
	.hscroll {
		position: absolute;
		left: 758px;
		top: 5px;
		width: 462px;
		height: 15px;
		display: flex;
	}
	.sb-btn.h {
		width: 15px;
		height: 15px;
	}
	.hthumb {
		width: 387px;
		box-sizing: border-box;
		background: #fff;
		border: 1px solid #a5a5a5;
		border-left: 0;
	}
	.htrack {
		flex: 1;
	}

	/* --- Status bar --- */

	.status {
		height: 22px;
		background: #f3f3f3;
		display: flex;
		align-items: center;
		font-size: 11.5px;
		position: relative;
		border-bottom: 1px solid #217346;
		box-sizing: border-box;
	}
	.ready {
		margin-left: 12px;
		color: #555;
	}
	.macro {
		margin-left: 22px;
		flex: none;
	}
	.access {
		margin-left: 17px;
		flex: none;
	}
	.acc-text {
		margin-left: 1px;
		color: #333;
		letter-spacing: -0.2px;
	}
	.status-right {
		position: absolute;
		inset: 0;
		display: flex;
		align-items: center;
		padding-left: 838px;
	}
	.disp {
		font-size: 12.5px;
		margin-right: 19px;
		width: 50px;
	}
	.view {
		width: 39px;
		height: 100%;
		display: flex;
		align-items: center;
		justify-content: center;
		flex: none;
	}
	.view.on {
		background: #c6c6c6;
	}
	.view.v2 {
		width: 38px;
	}
	.view.v3 {
		width: 43px;
	}
	.zm {
		width: 14px;
		text-align: center;
		font-size: 14px;
		margin-left: 1px;
	}
	.slider {
		position: relative;
		width: 100px;
		height: 1px;
		background: #777;
		margin: 0 2px;
	}
	.tick {
		position: absolute;
		left: 50px;
		top: -3px;
		width: 1px;
		height: 7px;
		background: #777;
	}
	.knob {
		position: absolute;
		left: 54px;
		top: -5px;
		width: 5px;
		height: 11px;
		background: #555;
	}
	.pctz {
		margin-left: 10px;
		font-family: 'Open Sans', sans-serif;
		font-size: 12.5px;
		color: #555;
	}

	/* --- Annotations --- */

	.shape,
	.shape-lines,
	.arrows {
		position: absolute;
		left: 0;
		top: 0;
		pointer-events: none;
	}

	.textbox {
		position: absolute;
		left: 99px;
		top: 378px;
		width: 112px;
		height: 163px;
		box-sizing: border-box;
		padding-bottom: 8px;
		background: #fff;
		border: 2px solid #7f7f7f;
		display: flex;
		flex-direction: column;
		align-items: center;
		justify-content: center;
		color: #333;
	}
	.textbox span {
		display: block;
	}
	.big {
		font-size: 20px;
		font-weight: 300;
		line-height: 37px;
	}
	.big.a {
		color: #111;
		font-weight: 400;
		line-height: 28px;
		font-family: 'Open Sans', sans-serif;
	}
	.small {
		font-size: 15px;
		line-height: 20px;
		font-weight: 300;
	}

	.frame {
		position: absolute;
		left: 414px;
		top: 74px;
		width: 40px;
		height: 75px;
		box-sizing: border-box;
		border: 4px solid #e60000;
	}

	.callout {
		position: absolute;
		box-sizing: border-box;
		background: #fff;
		border: 4px solid #f00000;
		color: #e60000;
		font-weight: 700;
		display: flex;
		align-items: center;
		justify-content: center;
		white-space: nowrap;
	}
	.c1 {
		left: 530px;
		top: 176px;
		width: 583px;
		height: 79px;
		font-size: 34px;
		letter-spacing: 1.8px;
	}
	.c2 {
		left: 334px;
		top: 533px;
		width: 694px;
		height: 80px;
		font-size: 34px;
		letter-spacing: 0.3px;
	}
</style>
